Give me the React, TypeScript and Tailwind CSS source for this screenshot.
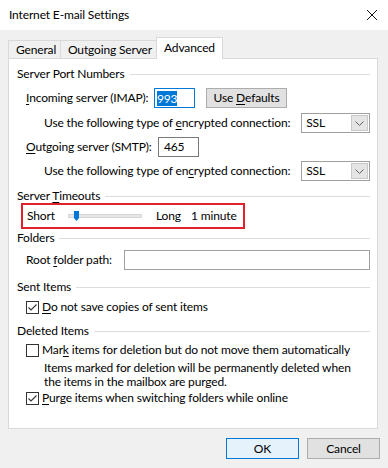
import React from "react";

function U({ children }: { children: React.ReactNode }) {
  return <span className="underline decoration-1 underline-offset-2">{children}</span>;
}

function Header({ children }: { children: React.ReactNode }) {
  return (
    <div className="flex h-[14px] items-center">
      <span className="whitespace-nowrap">{children}</span>
      <div className="ml-[5px] h-px flex-1 bg-[#dcdcdc]" />
    </div>
  );
}

function Select() {
  return (
    <div className="flex h-[20px] w-[69px] items-center border border-[#a0a0a0] bg-white">
      <span className="flex-1 pl-[4px]">SSL</span>
      <div className="mr-px flex h-[16px] w-[17px] items-center justify-center border border-[#c8c8c8] bg-[#e5e5e5]">
        <svg width="9" height="5" viewBox="0 0 9 5">
          <path d="M0.5 0.5 L4.5 4.5 L8.5 0.5" fill="none" stroke="#606060" strokeWidth="1" />
        </svg>
      </div>
    </div>
  );
}

function Check({ checked }: { checked?: boolean }) {
  return (
    <div className="flex h-[13px] w-[13px] shrink-0 items-center justify-center border border-[#333333] bg-white">
      {checked && (
        <svg width="11" height="11" viewBox="0 0 11 11">
          <path d="M1.5 5.5 L4 8 L9.5 2.5" fill="none" stroke="#333333" strokeWidth="1.1" />
        </svg>
      )}
    </div>
  );
}

export default function App() {
  return (
    <div className="h-[468px] w-[388px] overflow-hidden whitespace-nowrap bg-[#f0f0f0] text-[12px] leading-[14px] tracking-[-0.15px] text-black [font-family:'Lato','Segoe_UI',sans-serif]">
      {/* Title bar */}
      <div className="flex h-[30px] items-center justify-between bg-white pl-[9px] pr-[11px]">
        <span className="pb-[1px]">Internet E-mail Settings</span>
        <svg width="10" height="10" viewBox="0 0 10 10">
          <path d="M0 0 L10 10 M10 0 L0 10" stroke="#111" strokeWidth="1" />
        </svg>
      </div>

      {/* Tabs */}
      <div className="flex h-[28px] items-end pl-[8px]">
        <div className="flex h-[18px] w-[53px] items-center border border-b-0 border-[#d9d9d9] bg-[#f0f0f0] pl-[7px]">
          General
        </div>
        <div className="-ml-px flex h-[18px] w-[97px] items-center border border-b-0 border-[#d9d9d9] bg-[#f0f0f0] pl-[7px]">
          Outgoing Server
        </div>
        <div className="relative z-10 -mb-px -ml-px flex h-[22px] w-[67px] items-start border border-b-0 border-[#d9d9d9] bg-white pl-[7px] pt-[3px]">
          Advanced
        </div>
      </div>

      {/* Panel */}
      <div className="ml-[8px] h-[371px] w-[370px] border border-[#d9d9d9] bg-white pl-[8px] pr-[7px] pt-[8px]">
        <Header>Server Port Numbers</Header>

        <div className="ml-[9px] mt-[7px] flex h-[20px] items-center">
          <span className="w-[128px]">
            <U>I</U>ncoming server (IMAP):
          </span>
          <div className="flex h-[20px] w-[41px] items-center border border-[#0078d7] pl-[2px]">
            <span className="bg-[#0078d7] leading-[15px] text-white">993</span>
          </div>
          <div className="ml-[11px] flex h-[20px] w-[81px] items-center justify-center border border-[#adadad] bg-[#e1e1e1]">
            Use&nbsp;<U>D</U>efaults
          </div>
        </div>

        <div className="ml-[27px] mt-[5px] flex h-[20px] items-center">
          <span className="w-[258px]">
            Use the following type of <U>e</U>ncrypted connection:
          </span>
          <Select />
        </div>

        <div className="ml-[9px] mt-[4px] flex h-[20px] items-center">
          <span className="w-[132px]">
            <U>O</U>utgoing server (SMTP):
          </span>
          <div className="flex h-[20px] w-[41px] items-center border border-[#7a7a7a] pl-[5px]">465</div>
        </div>

        <div className="ml-[27px] mt-[4px] flex h-[20px] items-center">
          <span className="w-[258px]">
            Use the following type of en<U>c</U>rypted connection:
          </span>
          <Select />
        </div>

        <div className="mt-[8px]">
          <Header>
            Server <U>T</U>imeouts
          </Header>
        </div>

        <div className="ml-[4px] flex h-[26px] w-[224px] items-center border-2 border-[#e0222e] pl-[4px]">
          <span className="w-[41px]">Short</span>
          <div className="relative h-[14px] w-[74px]">
            <div className="absolute left-0 right-0 top-[5px] h-[4px] border border-[#d6d6d6] bg-[#e7e7e7]" />
            <svg className="absolute left-[6px] top-[2px]" width="5" height="10" viewBox="0 0 5 10">
              <path d="M0 0 H5 V7 L2.5 10 L0 7 Z" fill="#0078d7" />
            </svg>
          </div>
          <span className="ml-[14px] w-[35px]">Long</span>
          <span>1 minute</span>
        </div>

        <div className="mt-[2px]">
          <Header>Folders</Header>
        </div>

        <div className="ml-[9px] mt-[5px] flex h-[20px] items-center">
          <span className="w-[98px]">
            Root <U>f</U>older path:
          </span>
          <div className="h-[20px] flex-1 border border-[#a0a0a0]" />
        </div>

        <div className="mt-[10px]">
          <Header>Sent Items</Header>
        </div>

        <div className="ml-[9px] mt-[5px] flex h-[16px] items-center">
          <Check checked />
          <span className="ml-[3px]">
            <U>D</U>o not save copies of sent items
          </span>
        </div>

        <div className="mt-[9px]">
          <Header>Deleted Items</Header>
        </div>

        <div className="ml-[9px] mt-[4px] flex h-[16px] items-center">
          <Check />
          <span className="ml-[3px]">
            Mar<U>k</U> items for deletion but do not move them automatically
          </span>
        </div>

        <div className="ml-[27px] mt-[3px] leading-[14px]">
          <div>Items marked for deletion will be permanently deleted when</div>
          <div>the items in the mailbox are purged.</div>
        </div>

        <div className="ml-[9px] mt-[1px] flex h-[16px] items-center">
          <Check checked />
          <span className="ml-[3px]">
            <U>P</U>urge items when switching folders while online
          </span>
        </div>
      </div>

      {/* Buttons */}
      <div className="mt-[9px] flex justify-end gap-[8px] pr-[8px]">
        <div className="flex h-[21px] w-[73px] items-center justify-center border border-[#0078d7] bg-[#e5f1fb]">OK</div>
        <div className="flex h-[21px] w-[73px] items-center justify-center border border-[#adadad] bg-[#e1e1e1]">Cancel</div>
      </div>
    </div>
  );
}
